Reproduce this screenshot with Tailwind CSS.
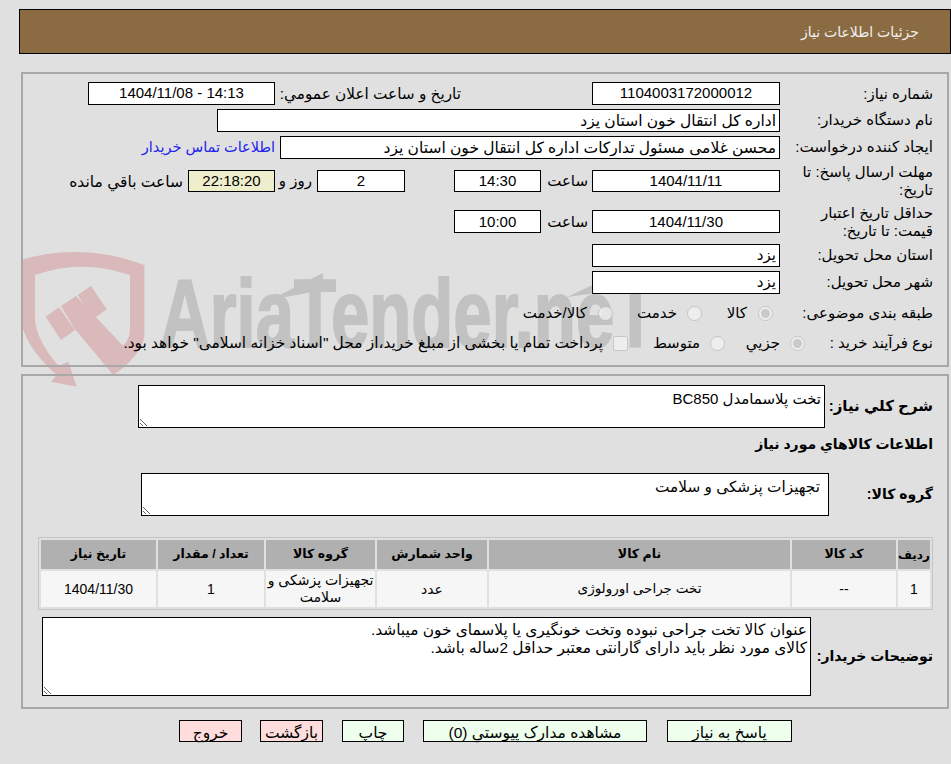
<!DOCTYPE html>
<html lang="fa" dir="rtl">
<head>
<meta charset="UTF-8">
<title>جزئیات اطلاعات نیاز</title>
<script src="https://cdn.jsdelivr.net/npm/@tailwindcss/browser@4"></script>
</head>
<body class="relative h-[764px] w-[951px] overflow-hidden bg-[#e0e0e0] font-['Liberation_Sans','DejaVu_Sans',sans-serif] text-[15px] text-black">

  <!-- header -->
  <div class="mt-[9px] flex h-[45px] w-[932px] items-center border border-black bg-[#8b6b42] pr-[31px] pt-[2px] text-[14px] text-[#f0f0f0]">جزئیات اطلاعات نیاز</div>

  <!-- watermark -->
  <div class="absolute left-[15px] top-[240px] z-0 h-[150px] w-[620px]" dir="ltr">
    <svg class="absolute left-0 top-0" width="300" height="150" viewBox="0 0 900 450" fill="#d9b9ba">
      <path d="M18 60 Q200 5 388 75 V290 Q375 350 295 405 L262 360 Q345 320 345 270 V105 Q200 55 60 105 V240 Q65 300 130 378 L160 365 L185 440 L108 425 L125 405 Q20 310 18 230 Z" />
      <path d="M138 198 L183 168 L345 340 L295 405 L180 268 Z" />
      <path d="M92 230 L132 202 L180 270 L138 300 Z" />
      <path d="M188 165 L228 138 L275 208 L235 237 Z" />
    </svg>
    <span class="absolute left-[145px] top-[25px] origin-top-left scale-x-[0.71] text-[97px] leading-none font-bold whitespace-nowrap text-[#c2c2c2] [-webkit-text-stroke:2px_#c2c2c2]">AriaTender.neT</span>
    <svg class="absolute left-0 top-0" width="620" height="150" fill="#c2c2c2">
      <path d="M255 60 L308 33 V50 L255 60 Z" />
      <path d="M552 57 L603 33 V50 L552 57 Z" />
    </svg>
  </div>

  <!-- main panel -->
  <div class="relative z-10 mr-[2px] mt-[18px] h-[295px] w-[928px] border-2 border-[#a8a8a8] pr-[14px] pt-[8px]">
    <div class="flex h-[23px] items-center">
      <div class="w-[153px] pt-[1px]">شماره نیاز:</div>
      <div class="flex h-[23px] w-[188px] items-center justify-center border border-black bg-white">1104003172000012</div>
      <div class="mr-[131px] w-[186px] whitespace-nowrap pt-[1px] text-[15.3px]">تاریخ و ساعت اعلان عمومي:</div>
      <div class="flex h-[23px] w-[187px] items-center justify-center border border-black bg-white">14:13 - 1404/11/08</div>
    </div>
    <div class="mt-[4px] flex h-[23px] items-center">
      <div class="w-[153px]">نام دستگاه خریدار:</div>
      <div class="flex h-[23px] w-[563px] items-center border border-black bg-white pr-[3px] text-[15.5px]">اداره کل انتقال خون استان یزد</div>
    </div>
    <div class="mt-[4px] flex h-[23px] items-center">
      <div class="w-[153px] whitespace-nowrap text-[15.2px]">ایجاد کننده درخواست:</div>
      <div class="flex h-[23px] w-[500px] items-center border border-black bg-white pr-[3px] text-[15.5px]">محسن غلامی مسئول تدارکات اداره کل انتقال خون استان یزد</div>
      <a class="mr-[5px] text-[14.5px] text-[#2222ee]" href="#">اطلاعات تماس خریدار</a>
    </div>
    <div class="mt-[3px] flex h-[38px] items-center">
      <div class="w-[153px] pl-[4px] leading-[18px]">مهلت ارسال پاسخ: تا تاریخ:</div>
      <div class="flex h-[22px] w-[188px] items-center justify-center border border-black bg-white">1404/11/11</div>
      <div class="w-[51px] pr-[4px] pt-[1px]">ساعت</div>
      <div class="flex h-[22px] w-[87px] items-center justify-center border border-black bg-white">14:30</div>
      <div class="w-[49px]"></div>
      <div class="flex h-[22px] w-[88px] items-center justify-center border border-black bg-white">2</div>
      <div class="w-[42px] pr-[5px] pt-[1px]">روز و</div>
      <div class="flex h-[22px] w-[87px] items-center justify-center border border-black bg-[#eeeecc]">22:18:20</div>
      <div class="pr-[5px] pt-[1px] text-[15.5px]">ساعت باقي مانده</div>
    </div>
    <div class="mt-[2px] flex h-[39px] items-center">
      <div class="w-[153px] pl-[4px] leading-[18px]">حداقل تاریخ اعتبار قیمت: تا تاریخ:</div>
      <div class="flex h-[23px] w-[188px] items-center justify-center border border-black bg-white pt-[1px]">1404/11/30</div>
      <div class="w-[51px] pr-[4px] pt-[1px]">ساعت</div>
      <div class="flex h-[23px] w-[87px] items-center justify-center border border-black bg-white pt-[1px]">10:00</div>
    </div>
    <div class="mt-[3px] flex h-[23px] items-center">
      <div class="w-[153px]">استان محل تحویل:</div>
      <div class="flex h-[23px] w-[188px] items-center border border-black bg-white pr-[3px]">یزد</div>
    </div>
    <div class="mt-[4px] flex h-[23px] items-center">
      <div class="w-[153px]">شهر محل تحویل:</div>
      <div class="flex h-[23px] w-[188px] items-center border border-black bg-white pr-[3px]">یزد</div>
    </div>
    <div class="mt-[8px] flex h-[22px] items-center">
      <div class="w-[153px] whitespace-nowrap">طبقه بندی موضوعی:</div>
      <input type="radio" disabled checked class="m-0 mr-[7px] size-[15px]">
      <span class="mr-[11px] w-[45px]">کالا</span>
      <input type="radio" disabled class="m-0 size-[15px]">
      <span class="mr-[10px] w-[64px]">خدمت</span>
      <input type="radio" disabled class="m-0 size-[15px]">
      <span class="mr-[11px]">کالا/خدمت</span>
    </div>
    <div class="mt-[8px] flex h-[22px] items-center">
      <div class="w-[128px] whitespace-nowrap">نوع فرآیند خرید :</div>
      <input type="radio" disabled checked class="m-0 size-[15px]">
      <span class="mr-[10px] w-[55px]">جزیي</span>
      <input type="radio" disabled class="m-0 size-[15px]">
      <span class="mr-[10px] w-[72px]">متوسط</span>
      <input type="checkbox" disabled class="m-0 size-[15px]">
      <span class="mr-[10px] whitespace-nowrap text-[15.4px]">پرداخت تمام یا بخشی از مبلغ خرید،از محل "اسناد خزانه اسلامی" خواهد بود.</span>
    </div>
  </div>

  <!-- details panel -->
  <div class="relative z-10 mr-[2px] mt-[7px] h-[335px] w-[928px] border-2 border-[#a8a8a8] pr-[14px] pt-[9px] text-[14px]">
    <div class="flex items-center">
      <div class="w-[108px] text-[15px] font-bold">شرح کلي نیاز:</div>
      <textarea readonly class="h-[43px] w-[687px] resize border border-black bg-white px-[3px] py-[2px] text-[15px] outline-none">تخت پلاسمامدل BC850</textarea>
    </div>
    <div class="mt-[6px] h-[20px] font-bold">اطلاعات کالاهاي مورد نیاز</div>
    <div class="mt-[19px] flex items-center">
      <div class="w-[104px] font-bold">گروه کالا:</div>
      <textarea readonly class="h-[43px] w-[688px] resize border border-black bg-white px-[8px] py-[2px] text-[15.3px] outline-none">تجهیزات پزشکی و سلامت</textarea>
    </div>
    <table class="mt-[21px] w-[895px] table-fixed border-separate border-spacing-[2px] border border-[#c4c4c4] text-center">
      <thead>
        <tr class="h-[29px] bg-[#b0b0b0] text-[12.5px] font-bold">
          <th class="w-[32px] text-[12px] font-bold">ردیف</th>
          <th class="w-[104px] font-bold">کد کالا</th>
          <th class="w-[301px] font-bold">نام کالا</th>
          <th class="w-[110px] font-bold">واحد شمارش</th>
          <th class="w-[109px] font-bold">گروه کالا</th>
          <th class="w-[106px] font-bold">تعداد / مقدار</th>
          <th class="font-bold">تاریخ نیاز</th>
        </tr>
      </thead>
      <tbody>
        <tr class="h-[36px] bg-[#f6f6f6]">
          <td>1</td>
          <td>--</td>
          <td class="text-[13.5px]">تخت جراحی اورولوژی</td>
          <td>عدد</td>
          <td class="leading-[17px]">تجهیزات پزشکی و سلامت</td>
          <td>1</td>
          <td>1404/11/30</td>
        </tr>
      </tbody>
    </table>
    <div class="mt-[7px] flex items-center">
      <div class="w-[122px] font-bold">توضیحات خریدار:</div>
      <textarea readonly class="h-[79px] w-[769px] resize border border-black bg-white px-[3px] pb-[2px] pt-[3px] text-[15.4px] leading-[18px] outline-none">عنوان کالا تخت جراحی نبوده وتخت خونگیری یا پلاسمای خون میباشد.
کالای مورد نظر باید دارای گارانتی معتبر حداقل 2ساله باشد.</textarea>
    </div>
  </div>

  <!-- buttons -->
  <div class="mt-[11px] flex h-[22px] pr-[159px] text-[15.5px]">
    <button class="w-[125px] border border-black bg-[#eeffee]">پاسخ به نیاز</button>
    <button class="mr-[20px] w-[224px] border border-black bg-[#eeffee]">مشاهده مدارک پیوستي (0)</button>
    <button class="mr-[19px] w-[62px] border border-black bg-[#eeffee]">چاپ</button>
    <button class="mr-[19px] w-[63px] border border-black bg-[#ffdddd]">بازگشت</button>
    <button class="mr-[18px] w-[63px] border border-black bg-[#ffdddd]">خروج</button>
  </div>
</body>
</html>
